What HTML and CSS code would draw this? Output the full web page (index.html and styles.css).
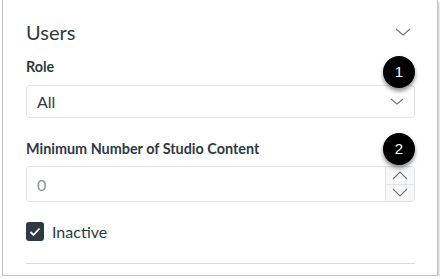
FILE: index.html
```html
<!DOCTYPE html>
<html lang="en">
<head>
<meta charset="UTF-8">
<title>Users filter</title>
<link rel="stylesheet" href="styles.css">
</head>
<body>
<div class="panel">
    <div class="panel-head">
        <h2 class="panel-title">Users</h2>
        <svg class="chev" width="16" height="8" viewBox="0 0 16 8"><path d="M1 1 L8 7 L15 1" fill="none" stroke="#6b7780" stroke-width="1.1"/></svg>
    </div>

    <div class="field field-role">
        <label class="field-label">Role</label>
        <div class="select">
            <span>All</span>
            <svg class="chev" width="14" height="7" viewBox="0 0 14 7"><path d="M1 1 L7 6 L13 1" fill="none" stroke="#6b7780" stroke-width="1.1"/></svg>
        </div>
        <span class="badge badge-role">1</span>
    </div>

    <div class="field field-count">
        <label class="field-label">Minimum Number of Studio Content</label>
        <div class="number">
            <span class="placeholder">0</span>
            <div class="spin">
                <div class="spin-btn"><svg width="16" height="9" viewBox="0 0 16 9"><path d="M1 8 L8 1 L15 8" fill="none" stroke="#6b7780" stroke-width="1.1"/></svg></div>
                <div class="spin-btn"><svg width="16" height="9" viewBox="0 0 16 9"><path d="M1 1 L8 8 L15 1" fill="none" stroke="#6b7780" stroke-width="1.1"/></svg></div>
            </div>
        </div>
        <span class="badge badge-count">2</span>
    </div>

    <div class="check">
        <span class="box"><svg width="12" height="10" viewBox="0 0 12 10"><path d="M1.5 5 L4.5 8 L10.5 1.5" fill="none" stroke="#fff" stroke-width="1.8"/></svg></span>
        <span>Inactive</span>
    </div>

    <div class="rule"></div>
</div>
</body>
</html>
```

FILE: styles.css
```css
body {
    margin: 0;
    background: #fff;
    font-family: Lato, "Open Sans", sans-serif;
    color: #2d3b45;
}

.panel {
    width: 436px;
    height: 276px;
    margin-left: 2px;
    padding: 0 22px 0 23px;
    border: 1px solid #c4c4c4;
    border-top: none;
    box-shadow: 1px 2px 2px rgba(0, 0, 0, 0.25);
    box-sizing: border-box;
    overflow: hidden;
}

.panel-head {
    display: flex;
    align-items: center;
    justify-content: space-between;
    height: 26px;
    margin-top: 19px;
    padding-right: 4px;
}

.panel-title {
    margin: 0;
    font-size: 20px;
    font-weight: 400;
    line-height: 26px;
}

.field {
    position: relative;
}

.field-role {
    margin-top: 13px;
}

.field-count {
    margin-top: 22px;
}

.field-label {
    display: block;
    font-size: 14.4px;
    font-weight: 700;
    line-height: 18px;
    margin-bottom: 9px;
}

.field-count .field-label {
    margin-bottom: 8px;
}

.select, .number {
    display: flex;
    align-items: center;
    justify-content: space-between;
    box-sizing: border-box;
    height: 33px;
    border: 1px solid #e2e4e6;
    border-radius: 4px;
    padding-left: 10px;
    font-size: 16px;
}

.select {
    padding-right: 10px;
}

.number {
    height: 36px;
}

.placeholder {
    color: #8a949c;
}

.spin {
    display: flex;
    flex-direction: column;
    width: 28px;
    height: 100%;
    border-left: 1px solid #e2e4e6;
    background: #f7f7f7;
    border-radius: 0 4px 4px 0;
}

.spin-btn {
    flex: 1;
    display: flex;
    align-items: center;
    justify-content: center;
}

.spin-btn + .spin-btn {
    border-top: 1px solid #e2e4e6;
}

.badge {
    position: absolute;
    right: 0;
    box-sizing: border-box;
    width: 32px;
    height: 32px;
    border-radius: 50%;
    background: #000;
    color: #fff;
    font-family: "Liberation Sans", Arial, sans-serif;
    font-size: 15px;
    line-height: 32px;
    text-align: center;
    box-shadow: 0 3px 4px rgba(0, 0, 0, 0.45);
}

.badge-role {
    top: -2px;
}

.badge-count {
    top: -7px;
}

.check {
    display: flex;
    align-items: center;
    gap: 8px;
    margin-top: 20px;
    height: 19px;
    font-size: 16px;
}

.box {
    display: flex;
    align-items: center;
    justify-content: center;
    width: 18px;
    height: 19px;
    border-radius: 3px;
    background: #2d3b45;
}

.rule {
    height: 1px;
    background: #dcdcdc;
    margin-top: 22px;
}
```
